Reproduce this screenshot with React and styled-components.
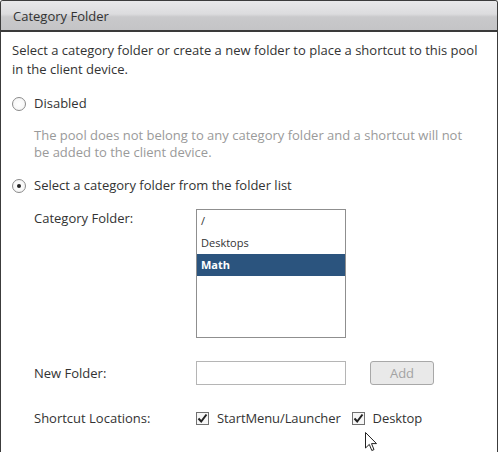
import React from "react";
import styled, { createGlobalStyle } from "styled-components";

const GlobalStyle = createGlobalStyle`
  html, body {
    margin: 0;
    padding: 0;
    background: #fff;
  }
  body {
    font-family: "Open Sans", "Noto Sans", sans-serif;
    font-size: 13px;
    color: #333;
  }
`;

const folders = ["/", "Desktops", "Math"];

const App = () => {
  return (
    <>
      <GlobalStyle />
      <Panel>
        <TitleBar>Category Folder</TitleBar>
        <Body>
          <Intro>
            Select a category folder or create a new folder to place a shortcut to this pool
            in the client device.
          </Intro>

          <RadioRow>
            <Radio />
            <span>Disabled</span>
          </RadioRow>
          <Hint>
            The pool does not belong to any category folder and a shortcut will not
            be added to the client device.
          </Hint>

          <RadioRow>
            <Radio checked />
            <span>Select a category folder from the folder list</span>
          </RadioRow>

          <FieldRow top="14px">
            <Label>Category Folder:</Label>
            <ListBox>
              {folders.map((f) => (
                <ListItem key={f} selected={f === "Math"}>{f}</ListItem>
              ))}
            </ListBox>
          </FieldRow>

          <FieldRow center top="23px">
            <Label>New Folder:</Label>
            <TextInput />
            <AddButton disabled>Add</AddButton>
          </FieldRow>

          <FieldRow center top="24px">
            <Label>Shortcut Locations:</Label>
            <CheckLabel>
              <CheckBox><CheckMark /></CheckBox>
              StartMenu/Launcher
            </CheckLabel>
            <CheckLabel>
              <CheckBox><CheckMark /></CheckBox>
              Desktop
            </CheckLabel>
            <Cursor />
          </FieldRow>
        </Body>
      </Panel>
    </>
  );
};

const CheckMark = () => (
  <svg width="11" height="11" viewBox="0 0 11 11">
    <path d="M1.5 5.5 L4.2 8.5 L9.5 1.5" fill="none" stroke="#222" strokeWidth="2" />
  </svg>
);

// mouse pointer hovering under the Desktop checkbox
const Cursor = () => (
  <CursorWrap>
    <svg width="13" height="20" viewBox="0 0 13 20">
      <path
        d="M0.5 0.5 L0.5 16 L4.3 12.4 L6.8 18.5 L9 17.6 L6.5 11.6 L11.5 11.6 Z"
        fill="#fff"
        stroke="#222"
        strokeWidth="1"
        strokeLinejoin="round"
      />
    </svg>
  </CursorWrap>
);

const Panel = styled.div`
  width: 498px;
  height: 452px;
  box-sizing: border-box;
  border: 1px solid #3c3c3c;
  border-bottom: none;
  border-radius: 3px 3px 0 0;
  overflow: hidden;
  background: #fff;
`;

const TitleBar = styled.div`
  height: 31px;
  box-sizing: border-box;
  padding: 0 12px;
  display: flex;
  align-items: center;
  background: linear-gradient(#e8e8ea 0%, #dcdcde 45%, #c9c9cb 55%, #c4c4c6 100%);
  border-bottom: 2px solid #3a3a3a;
  font-size: 13px;
  color: #333;
`;

const Body = styled.div`
  padding: 9px 11px 0 11px;
  position: relative;
`;

const Intro = styled.p`
  margin: 0;
  line-height: 19px;
`;

const RadioRow = styled.label`
  display: flex;
  align-items: center;
  gap: 8px;
  margin-top: 15px;
  line-height: 19px;
`;

const Radio = styled.span`
  width: 12px;
  height: 12px;
  border-radius: 50%;
  border: 1px solid #8a8a8a;
  background: radial-gradient(circle, #fff 0%, #f2f2f2 100%);
  display: flex;
  align-items: center;
  justify-content: center;
  flex: none;
  &::after {
    content: "";
    width: 4px;
    height: 4px;
    border-radius: 50%;
    background: ${(p) => (p.checked ? "#222" : "transparent")};
  }
`;

const Hint = styled.p`
  margin: 14px 0 0 22px;
  max-width: 432px;
  line-height: 17px;
  color: #9a9a9a;
`;

const FieldRow = styled.div`
  display: flex;
  align-items: ${(p) => (p.center ? "center" : "flex-start")};
  margin-top: ${(p) => p.top};
  padding-left: 22px;
  position: relative;
`;

const Label = styled.div`
  width: 162px;
  flex: none;
  line-height: 19px;
`;

const ListBox = styled.ul`
  list-style: none;
  margin: 0;
  padding: 0;
  width: 150px;
  height: 129px;
  box-sizing: border-box;
  border: 1px solid #8f8f8f;
  font-size: 11px;
`;

const ListItem = styled.li`
  height: 22px;
  line-height: 22px;
  padding: 0 4px;
  background: ${(p) => (p.selected ? "#2b547e" : "transparent")};
  color: ${(p) => (p.selected ? "#fff" : "#333")};
  font-weight: ${(p) => (p.selected ? 700 : 400)};
`;

const TextInput = styled.input`
  width: 150px;
  height: 24px;
  box-sizing: border-box;
  border: 1px solid #b5b5b5;
  margin: 0;
  padding: 0 4px;
  font: inherit;
`;

const AddButton = styled.button`
  margin-left: 24px;
  width: 64px;
  height: 24px;
  border-radius: 3px;
  border: 1px solid #a8a8a8;
  background: #e9e9e9;
  color: #a3a3a3;
  font: inherit;
  padding: 0;
`;

const CheckLabel = styled.label`
  display: flex;
  align-items: center;
  gap: 8px;
  margin-right: 11px;
  line-height: 19px;
  letter-spacing: -0.1px;
`;

const CheckBox = styled.span`
  width: 13px;
  height: 13px;
  box-sizing: border-box;
  border: 1px solid #707070;
  background: #f6f6f6;
  display: flex;
  align-items: center;
  justify-content: center;
`;

const CursorWrap = styled.div`
  position: absolute;
  left: 353px;
  top: 23px;
`;

export default App;
